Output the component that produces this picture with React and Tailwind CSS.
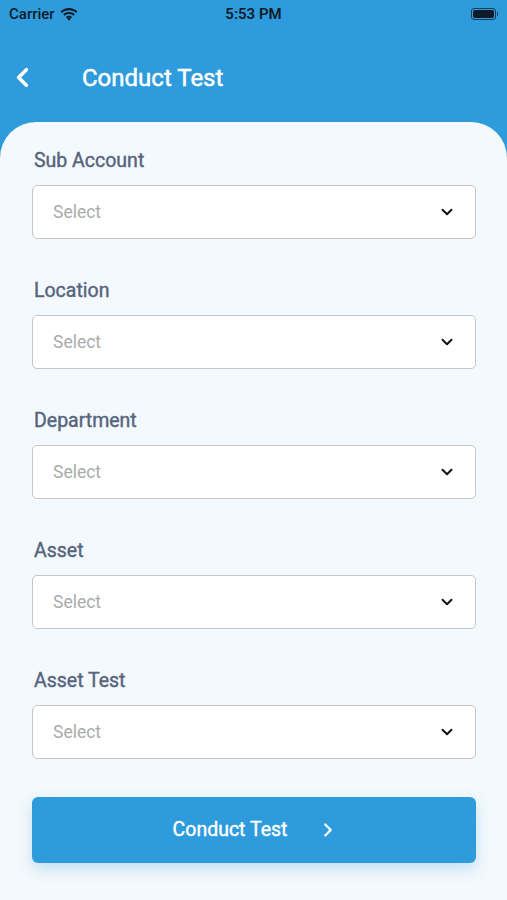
import React from 'react';
import { ChevronLeft, ChevronDown, ChevronRight } from 'lucide-react';

const fields = ['Sub Account', 'Location', 'Department', 'Asset', 'Asset Test'];

function StatusBar() {
  return (
    <div className="h-[28px] flex items-center justify-between px-[9px] text-[#0d1b2a] relative">
      <div className="flex items-center gap-[5px] text-[15px] font-medium">
        <span>Carrier</span>
        <svg width="18" height="13" viewBox="0 0 18 13" fill="#0d1b2a">
          <path d="M9 2.2c2.7 0 5.2 1 7.1 2.8l1.4-1.5C15.2 1.3 12.2 0 9 0S2.8 1.3.5 3.5L1.9 5C3.8 3.2 6.3 2.2 9 2.2z" />
          <path d="M9 6c1.7 0 3.2.6 4.4 1.7l1.4-1.5C13.3 4.8 11.2 3.9 9 3.9S4.7 4.8 3.2 6.2l1.4 1.5C5.8 6.6 7.3 6 9 6z" />
          <path d="M9 9.7c.8 0 1.5.3 2 .8L9 12.7l-2-2.2c.5-.5 1.2-.8 2-.8z" />
          <path d="M9 7.8c1.2 0 2.3.5 3.1 1.2l-1.2 1.3C10.4 9.8 9.7 9.6 9 9.6s-1.4.2-1.9.7L5.9 9C6.7 8.3 7.8 7.8 9 7.8z" />
        </svg>
      </div>
      <span className="absolute left-1/2 -translate-x-1/2 text-[15px] font-semibold">5:53 PM</span>
      <div className="flex items-center">
        <div className="w-[25px] h-[12px] rounded-[3px] border border-[#1b3a55] p-[1px]">
          <div className="w-full h-full rounded-[2px] bg-[#0d1b2a]" />
        </div>
        <div className="w-[1.5px] h-[4px] bg-[#1b3a55] rounded-r ml-[1px]" />
      </div>
    </div>
  );
}

function SelectField({ label }) {
  return (
    <div className="flex flex-col">
      <span className="text-[19.5px] leading-[24px] text-[#56647c] px-[2px] [-webkit-text-stroke:0.4px_#56647c]">{label}</span>
      <div className="mt-[12px] h-[54px] bg-white border border-[#c4c6c8] rounded-[5px] flex items-center justify-between pl-[20px] pr-[19px]">
        <span className="text-[17.5px] text-[#ababab]">Select</span>
        <ChevronDown size={18} strokeWidth={2.6} className="text-[#111]" />
      </div>
    </div>
  );
}

export default function App() {
  return (
    <div className="w-[507px] h-[900px] bg-[#2e9bdc] flex flex-col overflow-hidden" style={{ fontFamily: 'Roboto, "Noto Sans", sans-serif' }}>
      <StatusBar />
      <div className="h-[94px] flex items-center pl-[7px] pt-[5px]">
        <ChevronLeft size={31} strokeWidth={2.8} className="text-white" />
        <span className="ml-[44px] text-[24px] text-white [-webkit-text-stroke:0.5px_white]">Conduct Test</span>
      </div>
      <div className="flex-1 bg-[#f3f9fc] rounded-t-[36px] pl-[32px] pr-[31px] pt-[27px] flex flex-col">
        <div className="flex flex-col gap-[40px]">
          {fields.map((f) => (
            <SelectField key={f} label={f} />
          ))}
        </div>
        <button className="mt-[38px] h-[66px] w-full bg-[#2e9bdc] rounded-[6px] shadow-[0_6px_14px_rgba(46,155,220,0.25)] flex items-center justify-center text-white">
          <span className="text-[19.5px] ml-[4px] [-webkit-text-stroke:0.4px_white]">Conduct Test</span>
          <ChevronRight size={22} strokeWidth={2.4} className="ml-[30px]" />
        </button>
      </div>
    </div>
  );
}
